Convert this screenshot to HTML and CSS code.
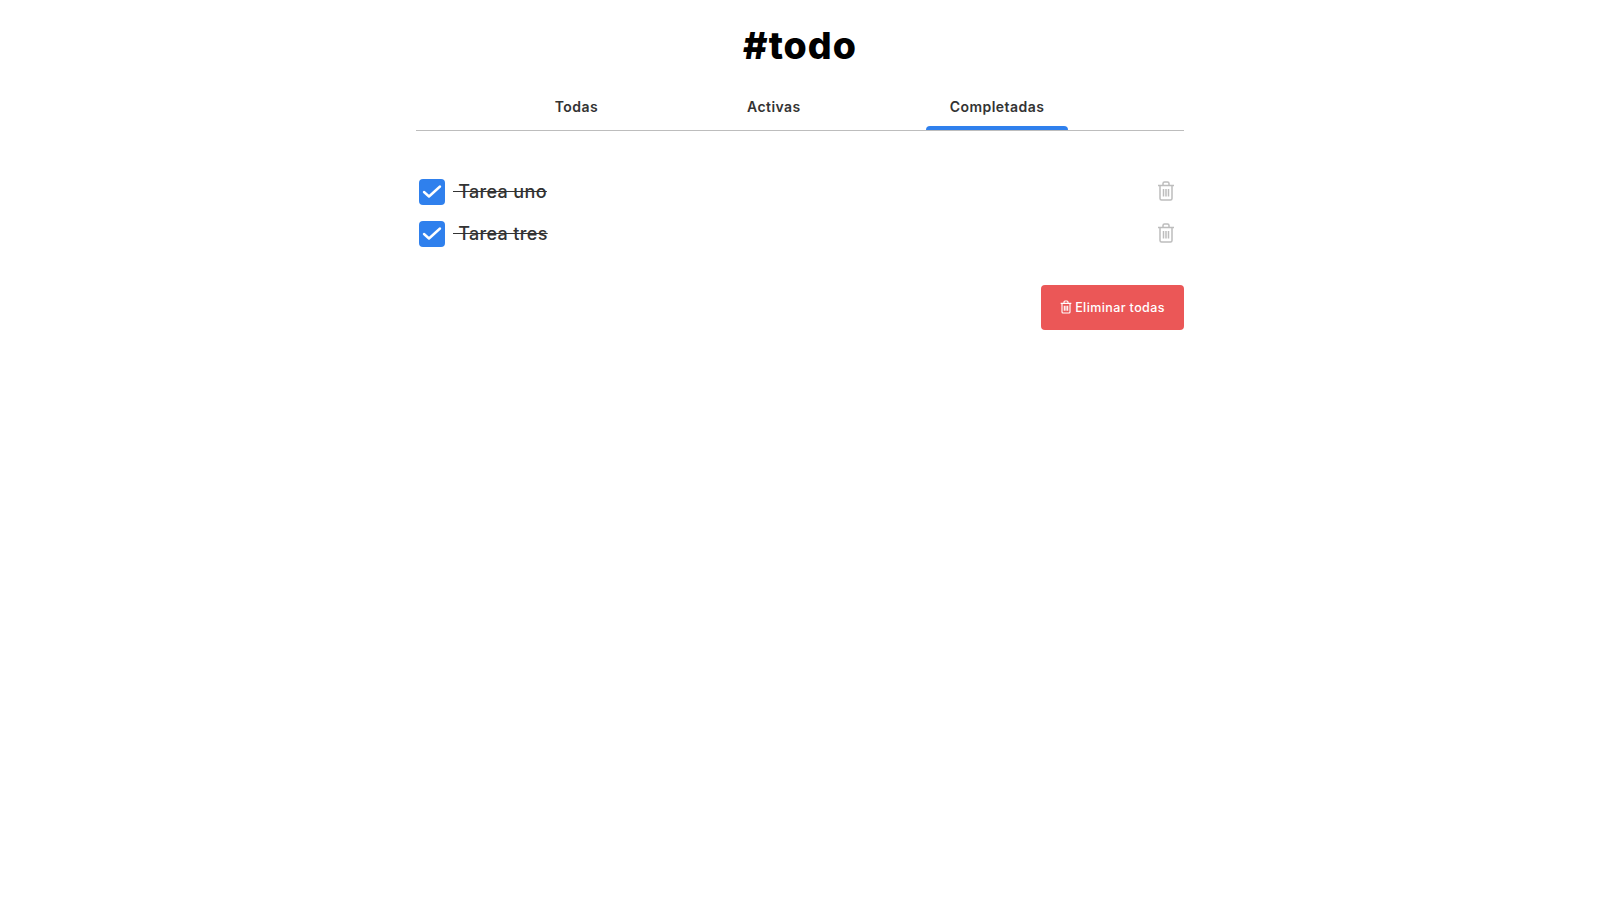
FILE: index.html
```html
<!DOCTYPE html>
<html lang="es">
<head>
  <meta charset="UTF-8" />
  <meta name="viewport" content="width=device-width, initial-scale=1.0"/>
  <title>#todo</title>
  <link rel="stylesheet" href="styles.css">
</head>
<body>

<main class="app">
  <h1 class="title">#todo</h1>

  <nav class="tabs">
    <button class="tab">Todas</button>
    <button class="tab">Activas</button>
    <button class="tab active">Completadas</button>
  </nav>

  <ul class="list">
    <li class="task">
      <span class="check">
        <svg viewBox="0 0 26 26" width="26" height="26"><path d="M5 13l5 4.500L21 7.500" fill="none" stroke="#fff" stroke-width="2.400" stroke-linecap="round" stroke-linejoin="round"/></svg>
      </span>
      <span class="task-name">&nbsp;Tarea uno</span>
      <button class="remove">
        <svg viewBox="0 0 18 20" width="18" height="20"><path d="M1 4.5h16M3 4.5V17.500a1.500 1.500 0 0 0 1.500 1.500h9a1.500 1.500 0 0 0 1.500-1.500V4.500M6 4.500V2.500A1.500 1.500 0 0 1 7.500 1h3A1.500 1.500 0 0 1 12 2.500V4.500M6.500 8v7.500M9 8v7.500M11.500 8v7.500" fill="none" stroke="#bdbdbd" stroke-width="1.500"/></svg>
      </button>
    </li>
    <li class="task">
      <span class="check">
        <svg viewBox="0 0 26 26" width="26" height="26"><path d="M5 13l5 4.500L21 7.500" fill="none" stroke="#fff" stroke-width="2.400" stroke-linecap="round" stroke-linejoin="round"/></svg>
      </span>
      <span class="task-name">&nbsp;Tarea tres</span>
      <button class="remove">
        <svg viewBox="0 0 18 20" width="18" height="20"><path d="M1 4.5h16M3 4.5V17.500a1.500 1.500 0 0 0 1.500 1.500h9a1.500 1.500 0 0 0 1.500-1.500V4.500M6 4.500V2.500A1.500 1.500 0 0 1 7.500 1h3A1.500 1.500 0 0 1 12 2.500V4.500M6.500 8v7.500M9 8v7.500M11.500 8v7.500" fill="none" stroke="#bdbdbd" stroke-width="1.500"/></svg>
      </button>
    </li>
  </ul>

  <div class="actions">
    <button class="clear-btn">
      <svg class="clear-icon" viewBox="0 0 18 20" width="12" height="14"><path d="M1 4.5h16M3 4.5V17.500a1.500 1.500 0 0 0 1.500 1.500h9a1.500 1.500 0 0 0 1.500-1.500V4.500M6 4.500V2.500A1.500 1.500 0 0 1 7.500 1h3A1.500 1.500 0 0 1 12 2.500V4.500M6.500 8v7.500M9 8v7.500M11.500 8v7.500" fill="none" stroke="#fff" stroke-width="1.700"/></svg>
      Eliminar todas
    </button>
  </div>
</main>

</body>
</html>
```

FILE: styles.css
```css
body {
  margin: 0;
  background: #fff;
  font-family: "Inter", "Noto Sans", sans-serif;
}
button {
  font-family: inherit;
  border: none;
  background: none;
  padding: 0;
}
.app {
  width: 768px;
  margin: 0 auto;
}
.title {
  margin: 0;
  padding-top: 24px;
  height: 44px;
  line-height: 44px;
  font-size: 37.5px;
  font-weight: 800;
  letter-spacing: 1px;
  text-align: center;
  color: #000;
}
.tabs {
  display: flex;
  justify-content: center;
  gap: 101px;
  height: 43px;
  margin-top: 19px;
  padding-right: 1px;
  border-bottom: 1px solid #bdbdbd;
}
.tab {
  position: relative;
  height: 43px;
  padding: 0 24px 4px;
  font-size: 14px;
  font-weight: 600;
  letter-spacing: 0.45px;
  color: #333;
}
.tab.active::after {
  content: "";
  position: absolute;
  left: 0;
  right: 0;
  bottom: 0;
  height: 4px;
  background: #2f80ed;
  border-radius: 4px 4px 0 0;
}
.list {
  list-style: none;
  margin: 0;
  padding: 0;
  padding-top: 48px;
}
.task {
  display: flex;
  align-items: center;
  height: 26px;
  margin-bottom: 16px;
}
.check {
  display: flex;
  width: 26px;
  height: 26px;
  margin-left: 3px;
  background: #2f80ed;
  border-radius: 4px;
}
.task-name {
  margin-left: 8px;
  margin-bottom: 2px;
  font-size: 18px;
  font-weight: 500;
  letter-spacing: 0.35px;
  color: #333;
  text-decoration: line-through;
}
.remove {
  display: flex;
  margin-left: auto;
  margin-right: 9px;
  margin-bottom: 2px;
}
.actions {
  display: flex;
  justify-content: flex-end;
  margin-top: 38px;
}
.clear-btn {
  display: flex;
  align-items: center;
  justify-content: center;
  gap: 3px;
  width: 143px;
  height: 45px;
  background: #eb5757;
  border-radius: 4px;
  font-size: 12.5px;
  font-weight: 500;
  letter-spacing: 0.4px;
  color: #fff;
}
.clear-icon {
  margin-bottom: 1px;
}
```
